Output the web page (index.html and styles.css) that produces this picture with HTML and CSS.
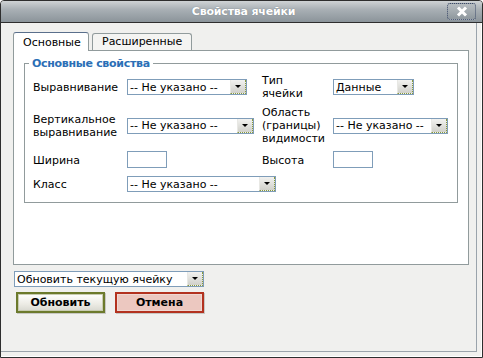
FILE: index.html
```html
<!DOCTYPE html>
<html>
<head>
  <meta charset="UTF-8">
  <title>Свойства ячейки</title>
  <link rel="stylesheet" href="styles.css">
</head>
<body>
  <div class="window">
    <div class="titlebar">
      <span class="title">Свойства ячейки</span>
      <span class="close">
        <svg width="12" height="11" viewBox="0 0 12 11"><path d="M2 1.5 L10 9.5 M10 1.5 L2 9.5" stroke="#fff" stroke-width="3"/></svg>
      </span>
    </div>
    <div class="content">
      <div class="tabs">
        <div class="tab active">Основные</div>
        <div class="tab">Расширенные</div>
      </div>
      <div class="panel">
        <fieldset class="group">
          <legend>Основные свойства</legend>
          <div class="grid">
            <div class="label">Выравнивание</div>
            <div><span class="select w120">-- Не указано --<i class="arrow"></i></span></div>
            <div class="label">Тип<br>ячейки</div>
            <div><span class="select w81">Данные<i class="arrow"></i></span></div>

            <div class="label">Вертикальное<br>выравнивание</div>
            <div><span class="select w127">-- Не указано --<i class="arrow"></i></span></div>
            <div class="label">Область<br>(границы)<br>видимости</div>
            <div><span class="select w115">-- Не указано --<i class="arrow"></i></span></div>

            <div class="label">Ширина</div>
            <div><span class="input"></span></div>
            <div class="label">Высота</div>
            <div><span class="input"></span></div>

            <div class="label">Класс</div>
            <div class="wide"><span class="select w149">-- Не указано --<i class="arrow"></i></span></div>
          </div>
        </fieldset>
      </div>
      <div class="action">
        <span class="select w190">Обновить текущую ячейку<i class="arrow"></i></span>
      </div>
      <div class="buttons">
        <span class="btn ok">Обновить</span>
        <span class="btn cancel">Отмена</span>
      </div>
    </div>
  </div>
</body>
</html>
```

FILE: styles.css
```css
* {
  box-sizing: border-box;
}

body {
  margin: 0;
  font-family: "DejaVu Sans", Verdana, sans-serif;
  font-size: 11px;
  color: #000;
  background: #fff;
}

.window {
  width: 483px;
  height: 358px;
  background: #f0f0ee;
  border: 1px solid #2e2e2e;
  border-radius: 4px 4px 0 0;
  box-shadow: inset -1px -1px 0 #fff, inset -5px -5px 0 #f0f0ee, inset -6px -6px 0 #9aa3ab;
  display: flex;
  flex-direction: column;
}

.titlebar {
  height: 22px;
  display: flex;
  align-items: center;
  justify-content: center;
  position: relative;
  background: linear-gradient(#cfd3d5 0%, #a9b0b5 40%, #8b949a 100%);
  border-bottom: 1px solid #2e2e2e;
  border-radius: 3px 3px 0 0;
}

.title {
  color: #fff;
  font-weight: bold;
  font-size: 11px;
  letter-spacing: -0.2px;
  padding-left: 4px;
  text-shadow: 0 0 1px #6a7278;
}

.close {
  position: absolute;
  right: 6px;
  top: 2px;
  width: 29px;
  height: 17px;
  border: 1px dotted #3c4a6a;
  border-radius: 3px;
  background: linear-gradient(#b7bdc1, #8f989e);
  display: flex;
  align-items: center;
  justify-content: center;
}

.content {
  padding: 8px 13px 0 12px;
}

.tabs {
  display: flex;
  gap: 3px;
  align-items: flex-end;
  height: 19px;
}

.tab {
  height: 17px;
  padding: 0 9px;
  line-height: 16px;
  background: #f4f4f2;
  border: 1px solid #919b9c;
  border-bottom: 0;
  border-radius: 3px 3px 0 0;
}

.tab.active {
  height: 19px;
  line-height: 19px;
  background: #fff;
  border-top-color: #5a6f8c;
  position: relative;
  top: 1px;
  width: 76px;
}

.panel {
  height: 215px;
  background: #fff;
  border: 1px solid #919b9c;
  padding: 6px 10px 0 10px;
}

.group {
  margin: 0;
  padding: 4px 0 7px 8px;
  border: 1px solid #919b9c;
  height: 146px;
}

.group legend {
  color: #2b6fb6;
  font-weight: bold;
  letter-spacing: -0.3px;
  padding: 0 3px;
  margin-left: -4px;
}

.grid {
  display: grid;
  grid-template-columns: 94px 135px 71px auto;
  grid-template-rows: 26px 39px 17px 16px;
  row-gap: 6px;
  align-items: center;
}

.grid > .label:nth-child(9),
.grid > .label:nth-child(11) {
  margin-top: 1px;
}

.grid > .label:nth-child(13),
.grid > .wide {
  position: relative;
  top: 2px;
}

.label {
  line-height: 13px;
}

.wide {
  grid-column: 2 / 5;
}

.select {
  display: flex;
  align-items: center;
  height: 16px;
  border: 1px solid #7f9db9;
  background: #fff;
  padding-left: 2px;
  white-space: nowrap;
  overflow: hidden;
  justify-content: space-between;
}

.arrow {
  flex: none;
  width: 16px;
  height: 14px;
  background: linear-gradient(#f2f2f0, #d0d0ca);
  border-left: 1px solid #e8e8e4;
  border-right: 1px dotted #8a9a3a;
  border-bottom: 1px dotted #8a9a3a;
  position: relative;
}

.arrow::after {
  content: "";
  position: absolute;
  left: 4px;
  top: 5px;
  border-left: 3px solid transparent;
  border-right: 3px solid transparent;
  border-top: 3px solid #000;
}

.w120 { width: 120px; }
.w81 { width: 81px; }
.w127 { width: 127px; }
.w115 { width: 115px; }
.w149 { width: 149px; }
.w190 { width: 190px; }

.input {
  display: block;
  width: 40px;
  height: 17px;
  border: 1px solid #7f9db9;
  background: #fff;
}

.action {
  margin-top: 6px;
  margin-left: 1px;
}

.buttons {
  display: flex;
  gap: 10px;
  margin-top: 5px;
  margin-left: 3px;
}

.btn {
  width: 89px;
  height: 21px;
  font-weight: bold;
  font-size: 11px;
  text-align: center;
  line-height: 17px;
  border: 2px solid;
  box-shadow: 1px 1px 0 #c8c8c4;
}

.ok {
  border-color: #6c7a2c;
  background: linear-gradient(#ffffff, #ecebe4 60%, #d8d8d0);
  outline: 1px solid #c8ccb0;
  outline-offset: -3px;
}

.cancel {
  border-color: #b3321f;
  background: #ecc8c0;
  outline: 1px solid #f0d8d2;
  outline-offset: -3px;
}
```
